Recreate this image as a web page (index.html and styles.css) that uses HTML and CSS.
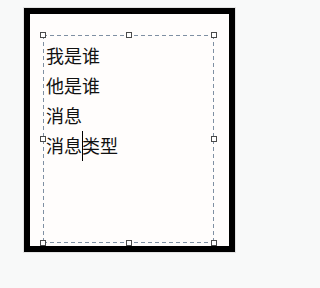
FILE: index.html
```html
<!DOCTYPE html>
<html lang="zh">
<head>
<meta charset="utf-8">
<link rel="stylesheet" href="styles.css">
</head>
<body>
<div class="frame">
  <div class="selection">
    <div class="line">我是谁</div>
    <div class="line">他是谁</div>
    <div class="line">消息</div>
    <div class="line">消息<span class="caret"></span>类型</div>
    <span class="handle h-tl"></span>
    <span class="handle h-tm"></span>
    <span class="handle h-tr"></span>
    <span class="handle h-ml"></span>
    <span class="handle h-mr"></span>
    <span class="handle h-bl"></span>
    <span class="handle h-bm"></span>
    <span class="handle h-br"></span>
  </div>
</div>
</body>
</html>
```

FILE: styles.css
```css
html, body {
  margin: 0;
  padding: 0;
  background: #f8f9f9;
}
body {
  width: 274px;
  height: 288px;
  overflow: hidden;
  font-family: "Noto Sans CJK SC", "Noto Sans", sans-serif;
}
.frame {
  box-sizing: border-box;
  margin: 8px 0 0 24px;
  width: 211px;
  height: 244px;
  border: 6px solid #000;
  background: #fffdfc;
  box-shadow: 0 0 0 1px #e2e2e2;
  padding: 21px 15px 3px 13px;
}
.selection {
  position: relative;
  box-sizing: border-box;
  height: 208px;
  padding: 5px 0 0 3px;
  background:
    repeating-linear-gradient(to right, #7f90a3 0 4px, transparent 4px 7px) left top / 100% 1px no-repeat,
    repeating-linear-gradient(to right, #7f90a3 0 4px, transparent 4px 7px) left bottom / 100% 1px no-repeat,
    repeating-linear-gradient(to bottom, #7f90a3 0 4px, transparent 4px 7px) left top / 1px 100% no-repeat,
    repeating-linear-gradient(to bottom, #7f90a3 0 4px, transparent 4px 7px) right top / 1px 100% no-repeat;
}
.line {
  font-size: 18px;
  line-height: 30px;
  height: 30px;
  color: #111;
  font-weight: 400;
  white-space: nowrap;
}
.caret {
  display: inline-block;
  width: 1px;
  height: 30px;
  margin-right: -1px;
  background: #000;
  vertical-align: -8px;
}
.handle {
  position: absolute;
  box-sizing: border-box;
  width: 6px;
  height: 6px;
  background: #fff;
  border: 1px solid #4a4a4a;
}
.h-tl { left: -3px; top: -3px; }
.h-tm { left: calc(50% - 3px); top: -3px; }
.h-tr { right: -3px; top: -3px; }
.h-ml { left: -3px; top: calc(50% - 3px); }
.h-mr { right: -3px; top: calc(50% - 3px); }
.h-bl { left: -3px; bottom: -3px; }
.h-bm { left: calc(50% - 3px); bottom: -3px; }
.h-br { right: -3px; bottom: -3px; }
```
